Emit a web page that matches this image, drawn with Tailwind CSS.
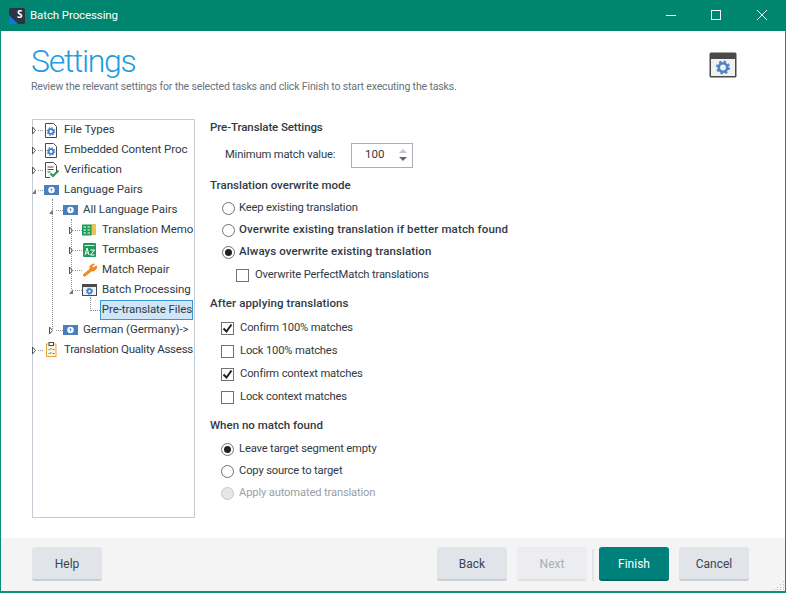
<!DOCTYPE html>
<html><head><meta charset="utf-8"><script src="https://cdn.jsdelivr.net/npm/@tailwindcss/browser@4"></script></head>
<body class="m-0 overflow-hidden bg-white">
<div class="w-[786px] h-[593px] flex flex-col border border-[#0a8f7e] border-t-0 bg-white text-[#2f3a45] font-['Roboto','Open_Sans',sans-serif] text-[11.5px]">
  <div class="h-[31px] shrink-0 bg-[#008571] -mx-px flex items-center text-white">
    <svg class="ml-[9px] w-4 h-4" viewBox="0 0 16 16"><rect width="16" height="16" rx="1.5" fill="#2a3442"/><path d="M0 7l9 9H0z" fill="#0a78e8"/><text x="8" y="10" font-size="10" font-weight="700" fill="#fff" font-family="Open Sans">S</text></svg>
    <span class="ml-[5px] pt-[1px] text-[11.5px] tracking-[-0.1px]">Batch Processing</span>
    <div class="ml-auto flex h-full items-center">
      <svg class="w-[46px] h-[31px]" viewBox="0 0 46 31"><path d="M19 15.5h10" stroke="#fff"/></svg>
      <svg class="w-[46px] h-[31px]" viewBox="0 0 46 31"><rect x="18.5" y="10.5" width="9" height="9" fill="none" stroke="#fff"/></svg>
      <svg class="w-[46px] h-[31px] mr-[1px]" viewBox="0 0 46 31"><path d="M18 10l10 10M28 10l-10 10" stroke="#fff"/></svg>
    </div>
  </div>

  <div class="h-[88px] shrink-0 flex justify-between pl-[30px] pr-[48px]">
    <div>
      <div class="text-[#1e9ce0] text-[32px] font-light leading-[34px] mt-[13px] tracking-[-1.3px]">Settings</div>
      <div class="text-[#66727d] text-[10.5px] tracking-[-0.15px] leading-[14px] mt-[2px]">Review the relevant settings for the selected tasks and click Finish to start executing the tasks.</div>
    </div>
    <svg class="w-[28px] h-[26px] mt-[21px]" viewBox="0 0 28 26"><rect x=".5" y=".5" width="27" height="25" rx="1.5" fill="#4a4a4a"/><rect x="2" y="7" width="24" height="17" fill="#f1f1f1"/><circle cx="14" cy="15.5" r="4.2" fill="none" stroke="#4d84c4" stroke-width="2.6"/><circle cx="14" cy="15.5" r="5.8" fill="none" stroke="#4d84c4" stroke-width="2.4" stroke-dasharray="2.3 2.25"/></svg>
  </div>

  <div class="flex-1 flex min-h-0 pl-[31px]">
    <div class="relative w-[163px] h-[399px] border border-[#c5ccd3] tracking-[-0.05px]">
      <div class="absolute left-[19px] top-[79px] h-[130px] border-l border-dotted border-[#8a8f94]"></div>
      <div class="absolute left-[38px] top-[99px] h-[70px] border-l border-dotted border-[#8a8f94]"></div>
      <div class="absolute left-[57px] top-[177px] h-[12px] border-l border-dotted border-[#8a8f94]"></div>
      <div class="flex flex-col whitespace-nowrap">
        <div class="h-5 flex items-center"><svg class="-ml-[1px] w-[12px] h-[9px] shrink-0" viewBox="0 0 12 9"><path d="M.5 1l3 3.5-3 3.5z" fill="#fff" stroke="#555"/><path d="M6 4.5h6" stroke="#999" stroke-dasharray="1 1"/></svg><svg class="w-4 h-4 shrink-0" viewBox="1 0 16 16"><path d="M2.5 1.5h8l3 3v11h-11z" fill="#fff" stroke="#4a4a4a"/><circle cx="8" cy="9.5" r="2.4" fill="none" stroke="#3f7fc4" stroke-width="1.6"/><circle cx="8" cy="9.5" r="3.6" fill="none" stroke="#3f7fc4" stroke-width="1.4" stroke-dasharray="1.4 1.43"/></svg><span class="ml-[4px]">File Types</span></div>
        <div class="h-5 flex items-center"><svg class="-ml-[1px] w-[12px] h-[9px] shrink-0" viewBox="0 0 12 9"><path d="M.5 1l3 3.5-3 3.5z" fill="#fff" stroke="#555"/><path d="M6 4.5h6" stroke="#999" stroke-dasharray="1 1"/></svg><svg class="w-4 h-4 shrink-0" viewBox="1 0 16 16"><path d="M2.5 1.5h8l3 3v11h-11z" fill="#fff" stroke="#4a4a4a"/><circle cx="8" cy="9.5" r="2.4" fill="none" stroke="#3f7fc4" stroke-width="1.6"/><circle cx="8" cy="9.5" r="3.6" fill="none" stroke="#3f7fc4" stroke-width="1.4" stroke-dasharray="1.4 1.43"/></svg><span class="ml-[4px]">Embedded Content Proc</span></div>
        <div class="h-5 flex items-center"><svg class="-ml-[1px] w-[12px] h-[9px] shrink-0" viewBox="0 0 12 9"><path d="M.5 1l3 3.5-3 3.5z" fill="#fff" stroke="#555"/><path d="M6 4.5h6" stroke="#999" stroke-dasharray="1 1"/></svg><svg class="w-4 h-4 shrink-0" viewBox="0 0 16 16"><path d="M1.5.5h8l3 3v7M6 15.5H1.5V.5" fill="#fff" stroke="#4a4a4a"/><path d="M3.5 5h6M3.5 7.5h6M3.5 10h3" stroke="#4a4a4a"/><path d="M6.5 11.5l2.5 2.5 5.5-5.5" fill="none" stroke="#1f9a55" stroke-width="2"/></svg><span class="ml-[4px]">Verification</span></div>
        <div class="h-5 flex items-center"><svg class="-ml-[1px] w-[12px] h-[9px] shrink-0" viewBox="0 0 12 9"><path d="M0 8l4-5v5z" fill="#777"/><path d="M6 4.5h6" stroke="#999" stroke-dasharray="1 1"/></svg><svg class="w-[15px] h-[10px] shrink-0 mr-[2px]" viewBox="0 0 15 10"><rect width="15" height="10" fill="#4a7fbe"/><circle cx="7.5" cy="5" r="3.2" fill="#fff"/><path d="M6.5 3l2 1-1 3z" fill="#4a7fbe"/></svg><span class="ml-[3px]">Language Pairs</span></div>
        <div class="h-5 flex items-center pl-[16px]"><svg class="w-[14px] h-[9px] shrink-0" viewBox="0 0 14 9"><path d="M0 8l4-5v5z" fill="#777"/><path d="M7 4.5h7" stroke="#999" stroke-dasharray="1 1"/></svg><svg class="w-[15px] h-[10px] shrink-0 mr-[2px]" viewBox="0 0 15 10"><rect width="15" height="10" fill="#4a7fbe"/><circle cx="7.5" cy="5" r="3.2" fill="#fff"/><path d="M6.5 3l2 1-1 3z" fill="#4a7fbe"/></svg><span class="ml-[3px]">All Language Pairs</span></div>
        <div class="h-5 flex items-center pl-[36px]"><svg class="w-[13px] h-[9px] shrink-0" viewBox="0 0 13 9"><path d="M.5 1l3 3.5-3 3.5z" fill="#fff" stroke="#555"/><path d="M6 4.5h7" stroke="#999" stroke-dasharray="1 1"/></svg><svg class="w-[16px] h-[14px] shrink-0" viewBox="0 0 16 14"><rect x="9" y="1" width="5" height="11" fill="#efc158"/><rect x="0" y="1.5" width="9.5" height="11" fill="#1e9a5b"/><path d="M1.5 4h2.5M5.5 4h2.5M1.5 7h2.5M5.5 7h2.5M1.5 10h2.5M5.5 10h2.5" stroke="#fff"/></svg><span class="ml-[4px] tracking-[-0.1px]">Translation Memo</span></div>
        <div class="h-5 flex items-center pl-[36px]"><svg class="w-[13px] h-[9px] shrink-0" viewBox="0 0 13 9"><path d="M.5 1l3 3.5-3 3.5z" fill="#fff" stroke="#555"/><path d="M6 4.5h7" stroke="#999" stroke-dasharray="1 1"/></svg><svg class="w-4 h-[14px] shrink-0" viewBox="0 0 16 14"><rect x="1" y="0" width="13" height="14" rx="1" fill="#1e9a5b"/><rect x="2.5" y="2" width="10" height="1" fill="#d8f0e2"/><path d="M3 12l2-7 2 7M3.8 10h2.4M8.5 7h4l-4 5h4" fill="none" stroke="#fff"/></svg><span class="ml-[4px]">Termbases</span></div>
        <div class="h-5 flex items-center pl-[36px]"><svg class="w-[13px] h-[9px] shrink-0" viewBox="0 0 13 9"><path d="M.5 1l3 3.5-3 3.5z" fill="#fff" stroke="#555"/><path d="M6 4.5h7" stroke="#999" stroke-dasharray="1 1"/></svg><svg class="w-4 h-[14px] shrink-0" viewBox="0 0 16 14"><path d="M1 12l7-6c-.8-2.5 1-5 4.5-5L10 3.5l1 1.5 3.5-2c.5 3-2 5.5-5 5L2.5 13.5z" fill="#f08a24" stroke="#f08a24" stroke-linejoin="round"/></svg><span class="ml-[4px]">Match Repair</span></div>
        <div class="h-5 flex items-center pl-[36px]"><svg class="w-[13px] h-[9px] shrink-0" viewBox="0 0 13 9"><path d="M0 8l4-5v5z" fill="#777"/><path d="M6 4.5h7" stroke="#999" stroke-dasharray="1 1"/></svg><svg class="w-4 h-[12px] shrink-0" viewBox="0 0 16 12"><rect x=".5" y=".5" width="14" height="11" fill="#f1f1f1" stroke="#4a4a4a"/><rect x="1" y="1" width="13" height="2" fill="#4a4a4a"/><circle cx="7.5" cy="7.2" r="2" fill="none" stroke="#3f7fc4" stroke-width="1.4"/><circle cx="7.5" cy="7.2" r="3" fill="none" stroke="#3f7fc4" stroke-width="1.2" stroke-dasharray="1.2 1.15"/></svg><span class="ml-[4px]">Batch Processing</span></div>
        <div class="h-5 flex items-center pl-[57px]"><div class="w-[10px] border-t border-dotted border-[#8a8f94]"></div><div class="h-5 flex-1 mr-[1px] flex items-center bg-[#cfe6f8] border border-[#3b97d3] pl-[1px] tracking-[-0.1px]">Pre-translate Files</div></div>
        <div class="h-5 flex items-center pl-[16px]"><svg class="w-[14px] h-[9px] shrink-0" viewBox="0 0 14 9"><path d="M.5 1l3 3.5-3 3.5z" fill="#fff" stroke="#555"/><path d="M7 4.5h7" stroke="#999" stroke-dasharray="1 1"/></svg><svg class="w-[15px] h-[10px] shrink-0 mr-[2px]" viewBox="0 0 15 10"><rect width="15" height="10" fill="#4a7fbe"/><circle cx="7.5" cy="5" r="3.2" fill="#fff"/><path d="M6.5 3l2 1-1 3z" fill="#4a7fbe"/></svg><span class="ml-[3px]">German (Germany)-&gt;</span></div>
        <div class="h-5 flex items-center"><svg class="-ml-[1px] w-[12px] h-[9px] shrink-0" viewBox="0 0 12 9"><path d="M.5 1l3 3.5-3 3.5z" fill="#fff" stroke="#555"/><path d="M6 4.5h6" stroke="#999" stroke-dasharray="1 1"/></svg><svg class="w-4 h-4 shrink-0" viewBox="0 0 16 16"><rect x="2.5" y="2" width="9.5" height="12.5" fill="#fff6df" stroke="#e8a33d"/><rect x="5" y=".5" width="4.5" height="3" fill="#fff" stroke="#4a4a4a"/><path d="M4.5 7l1 1 2-2M4.5 11l1 1 2-2M8.5 7.5h2M8.5 11.5h2" fill="none" stroke="#3f7fc4"/></svg><span class="ml-[4px] tracking-[-0.25px]">Translation Quality Assess</span></div>
      </div>
    </div>

    <div class="ml-[15px] flex-1 flex flex-col">
      <div class="h-[17px] font-medium leading-[17px] tracking-[-0.1px]">Pre-Translate Settings</div>
      <div class="flex items-center h-[26px] mt-[6px] pl-[15px]"><span class="w-[126px] text-[11.2px] tracking-[-0.15px]">Minimum match value:</span>
        <div class="w-[62px] h-[25px] border border-[#a9afb4] flex items-center"><span class="ml-[13px]">100</span>
          <svg class="ml-auto mr-[4px] w-[10px] h-[14px]" viewBox="0 0 10 14"><path d="M5 1l4 4H1z" fill="#c5c8cb"/><path d="M5 13L1 9h8z" fill="#5f666c"/></svg></div></div>
      <div class="h-[17px] mt-[9px] font-medium leading-[17px]">Translation overwrite mode</div>
      <div class="flex flex-col mt-[3px] pl-[12px] text-[11.2px] tracking-[-0.15px]">
        <label class="h-[22px] flex items-center"><span class="w-[13px] h-[13px] rounded-full border border-[#6d7378]"></span><span class="ml-[4px]">Keep existing translation</span></label>
        <label class="h-[22px] flex items-center text-[11.5px] tracking-[0.14px] font-medium"><span class="w-[13px] h-[13px] rounded-full border border-[#6d7378]"></span><span class="ml-[4px]">Overwrite existing translation if better match found</span></label>
        <label class="h-[22px] flex items-center text-[11.5px] tracking-[0.1px] font-medium"><span class="w-[13px] h-[13px] rounded-full border border-[#6d7378] flex items-center justify-center"><span class="w-[7px] h-[7px] rounded-full bg-[#222]"></span></span><span class="ml-[4px]">Always overwrite existing translation</span></label>
        <label class="h-[23px] mt-[1px] flex items-center pl-[14px]"><span class="w-[13px] h-[13px] border border-[#6d7378]"></span><span class="ml-[6px]">Overwrite PerfectMatch translations</span></label>
      </div>
      <div class="h-[17px] mt-[8px] font-medium leading-[17px] tracking-[0.1px]">After applying translations</div>
      <div class="flex flex-col mt-[5px] pl-[11px] text-[11.2px] tracking-[-0.15px]">
        <label class="h-[23px] flex items-center"><span class="w-[13px] h-[13px] border border-[#6d7378] flex items-center justify-center"><svg class="w-[11px] h-[11px]" viewBox="0 0 11 11"><path d="M1.5 5.5l3 3 5-7" fill="none" stroke="#222" stroke-width="2"/></svg></span><span class="ml-[6px]">Confirm 100% matches</span></label>
        <label class="h-[23px] flex items-center"><span class="w-[13px] h-[13px] border border-[#6d7378]"></span><span class="ml-[6px]">Lock 100% matches</span></label>
        <label class="h-[23px] flex items-center"><span class="w-[13px] h-[13px] border border-[#6d7378] flex items-center justify-center"><svg class="w-[11px] h-[11px]" viewBox="0 0 11 11"><path d="M1.5 5.5l3 3 5-7" fill="none" stroke="#222" stroke-width="2"/></svg></span><span class="ml-[6px]">Confirm context matches</span></label>
        <label class="h-[23px] flex items-center"><span class="w-[13px] h-[13px] border border-[#6d7378]"></span><span class="ml-[6px]">Lock context matches</span></label>
      </div>
      <div class="h-[17px] mt-[8px] font-medium leading-[17px]">When no match found</div>
      <div class="flex flex-col mt-[4px] pl-[11px] text-[11.2px] tracking-[-0.15px]">
        <label class="h-[22px] flex items-center"><span class="w-[13px] h-[13px] rounded-full border border-[#6d7378] flex items-center justify-center"><span class="w-[7px] h-[7px] rounded-full bg-[#222]"></span></span><span class="ml-[5px]">Leave target segment empty</span></label>
        <label class="h-[22px] flex items-center"><span class="w-[13px] h-[13px] rounded-full border border-[#6d7378]"></span><span class="ml-[5px]">Copy source to target</span></label>
        <label class="h-[22px] flex items-center text-[#9aa0a5]"><span class="w-[13px] h-[13px] rounded-full border border-[#c3c6c9] bg-[#e6e6e6]"></span><span class="ml-[5px]">Apply automated translation</span></label>
      </div>
    </div>
  </div>

  <div class="relative h-[54px] shrink-0 bg-[#f4f4f4] border-b border-[#0a8f7e] flex items-start pt-[9px] pl-[31px] text-[12px]">
    <button class="w-[70px] h-[34px] pt-[2px] rounded-[3px] bg-[#e1e5ea] border-b-2 border-[#c8ced4] text-[#3a4550]">Help</button>
    <div class="ml-auto flex items-start mr-[36px]">
      <button class="w-[70px] h-[34px] pt-[2px] rounded-[3px] bg-[#e1e5ea] border-b-2 border-[#c8ced4] text-[#3a4550]">Back</button>
      <button class="ml-[10px] w-[70px] h-[34px] pt-[2px] rounded-[3px] bg-[#ebedf0] border-b-2 border-[#dfe2e5] text-[#a9adb1]">Next</button>
      <div class="ml-[5px] w-[2px] h-[32px] bg-[#e1e5ea] mt-[2px]"></div>
      <button class="ml-[5px] w-[70px] h-[34px] pt-[2px] rounded-[3px] bg-[#00807a] border-b-2 border-[#006a63] text-white">Finish</button>
      <button class="ml-[10px] w-[70px] h-[34px] pt-[2px] rounded-[3px] bg-[#e1e5ea] border-b-2 border-[#c8ced4] text-[#3a4550]">Cancel</button>
    </div>
    <svg class="absolute right-0 bottom-0 w-[12px] h-[12px]" viewBox="0 0 12 12"><path d="M10 2h1v1h-1zM7 5h1v1H7zM10 5h1v1h-1zM4 8h1v1H4zM7 8h1v1H7zM10 8h1v1h-1zM1 10h1v1H1zM4 10h1v1H4zM7 10h1v1H7zM10 10h1v1h-1z" fill="#b9bec3"/></svg>
  </div>
</div>
</body></html>
